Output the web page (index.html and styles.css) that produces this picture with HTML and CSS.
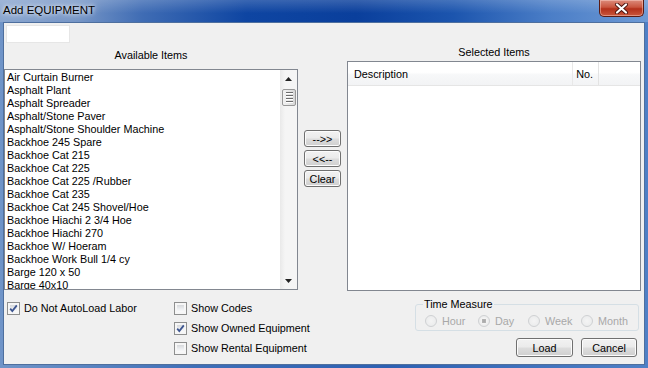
FILE: index.html
```html
<!DOCTYPE html>
<html lang="en">
<head>
  <meta charset="UTF-8">
  <title>Add EQUIPMENT</title>
  <link rel="stylesheet" href="styles.css">
</head>
<body>

<div class="window">
  <div class="titlebar">
    <span class="title">Add EQUIPMENT</span>
    <span class="close">
      <svg width="15" height="11" viewBox="0 0 15 11">
        <path d="M3 1.5 L12 9.5 M12 1.5 L3 9.5" stroke="#4a1410" stroke-width="4" stroke-linecap="round"/>
        <path d="M3 1.5 L12 9.5 M12 1.5 L3 9.5" stroke="#fff" stroke-width="2.2" stroke-linecap="round"/>
      </svg>
    </span>
  </div>

  <div class="client">
    <div class="topbox"></div>

    <div class="main">
      <div class="col col-left">
        <div class="caption cap-left">Available Items</div>
        <div class="listbox">
          <ul class="items">
            <li>Air Curtain Burner</li>
            <li>Asphalt Plant</li>
            <li>Asphalt Spreader</li>
            <li>Asphalt/Stone Paver</li>
            <li>Asphalt/Stone Shoulder Machine</li>
            <li>Backhoe 245 Spare</li>
            <li>Backhoe Cat 215</li>
            <li>Backhoe Cat 225</li>
            <li>Backhoe Cat 225 /Rubber</li>
            <li>Backhoe Cat 235</li>
            <li>Backhoe Cat 245 Shovel/Hoe</li>
            <li>Backhoe Hiachi 2 3/4 Hoe</li>
            <li>Backhoe Hiachi 270</li>
            <li>Backhoe W/ Hoeram</li>
            <li>Backhoe Work Bull 1/4 cy</li>
            <li>Barge 120 x 50</li>
            <li>Barge 40x10</li>
          </ul>
          <div class="vscroll">
            <div class="sb-btn">
              <svg width="7" height="4" viewBox="0 0 7 4"><path d="M0 4 L3.5 0 L7 4 Z" fill="#222"/></svg>
            </div>
            <div class="sb-thumb"><span></span><span></span><span></span><span></span></div>
            <div class="sb-track"></div>
            <div class="sb-btn">
              <svg width="7" height="4" viewBox="0 0 7 4"><path d="M0 0 L7 0 L3.5 4 Z" fill="#222"/></svg>
            </div>
          </div>
        </div>
      </div>

      <div class="movers">
        <button class="btn btn-move">--&gt;&gt;</button>
        <button class="btn btn-move">&lt;&lt;--</button>
        <button class="btn btn-move">Clear</button>
      </div>

      <div class="col col-right">
        <div class="caption cap-right">Selected Items</div>
        <div class="listview">
          <div class="lv-head">
            <span class="lv-col lv-desc">Description</span>
            <span class="lv-col lv-no">No.</span>
            <span class="lv-col lv-rest"></span>
          </div>
        </div>
      </div>
    </div>

    <div class="bottom">
      <div class="opts opts-a">
        <label class="check">
          <span class="box checked"><svg width="13" height="13" viewBox="0 0 13 13"><path d="M3.2 6.6 L5.3 9 L9.8 3.4" fill="none" stroke="#3d5590" stroke-width="1.8"/></svg></span>
          Do Not AutoLoad Labor
        </label>
      </div>
      <div class="opts opts-b">
        <label class="check"><span class="box"></span>Show Codes</label>
        <label class="check">
          <span class="box checked"><svg width="13" height="13" viewBox="0 0 13 13"><path d="M3.2 6.6 L5.3 9 L9.8 3.4" fill="none" stroke="#3d5590" stroke-width="1.8"/></svg></span>
          Show Owned Equipment
        </label>
        <label class="check"><span class="box"></span>Show Rental Equipment</label>
      </div>
      <div class="opts opts-c">
        <fieldset class="group">
          <legend>Time Measure</legend>
          <div class="radios">
            <span class="radio r-hour"><span class="dot"></span>Hour</span>
            <span class="radio r-day"><span class="dot on"></span>Day</span>
            <span class="radio r-week"><span class="dot"></span>Week</span>
            <span class="radio r-month"><span class="dot"></span>Month</span>
          </div>
        </fieldset>
        <div class="actions">
          <button class="btn btn-load">Load</button>
          <button class="btn btn-cancel">Cancel</button>
        </div>
      </div>
    </div>
  </div>
</div>

</body>
</html>
```

FILE: styles.css
```css
html, body {
  margin: 0;
  padding: 0;
}

body {
  width: 648px;
  height: 368px;
  overflow: hidden;
  font-family: "Liberation Sans", Arial, sans-serif;
  font-size: 10.8px;
  color: #000;
}

/* window frame */
.window {
  height: 368px;
  display: flex;
  flex-direction: column;
  background: linear-gradient(90deg, #6f94c8 0%, #3f6fb8 30%, #2d60b2 60%, #4f80c6 100%);
}

.titlebar {
  height: 22px;
  display: flex;
  justify-content: space-between;
  align-items: flex-start;
  background:
    linear-gradient(180deg, rgba(255,255,255,0.18) 0%, rgba(255,255,255,0) 60%),
    linear-gradient(90deg, #8aa6cf 0%, #7595c6 12%, #3f6cb4 22%, #0e45a2 38%, #0a3f9c 55%, #1c55ae 70%, #4b7ec7 85%, #6e9ad5 100%);
}

.title {
  padding: 3px 0 0 3px;
  font-size: 11.5px;
  line-height: 14px;
  color: #000;
  text-shadow: 0 0 4px #fff, 0 0 8px rgba(255,255,255,0.8);
}

.close {
  width: 45px;
  height: 17px;
  margin-right: 4px;
  box-sizing: border-box;
  border: 1px solid #5a1b14;
  border-top: none;
  border-radius: 0 0 5px 5px;
  background: linear-gradient(180deg, #dc8b7c 0%, #c9553f 45%, #b3301b 55%, #c9563c 100%);
  box-shadow: inset 0 0 0 1px rgba(255,220,210,0.45);
  display: flex;
  align-items: center;
  justify-content: center;
}

.client {
  flex: 1;
  margin: 0 3px 3px;
  border: 1px solid #4e6f9e;
  background: #f0f0f0;
  display: flex;
  flex-direction: column;
}

.topbox {
  width: 64px;
  height: 18px;
  margin: 2px 0 0 2px;
  box-sizing: border-box;
  background: #fff;
  border: 1px solid #e6e6e6;
}

/* list area */
.main {
  height: 248px;
  display: flex;
}

.col {
  width: 294px;
  display: flex;
  flex-direction: column;
}

.caption {
  text-align: center;
}

.cap-left {
  height: 26px;
  line-height: 24px;
}

.cap-right {
  height: 18px;
  line-height: 18px;
}

.col-right {
  margin-left: 6px;
}

.listbox {
  height: 221px;
  box-sizing: border-box;
  border: 1px solid #828790;
  background: #fff;
  display: flex;
  overflow: hidden;
}

.items {
  flex: 1;
  margin: 0;
  padding: 1px 0 0 2px;
  list-style: none;
  line-height: 13px;
  overflow: hidden;
  white-space: nowrap;
}

.vscroll {
  width: 17px;
  display: flex;
  flex-direction: column;
  background: linear-gradient(90deg, #e9e9e9 0%, #f5f5f5 30%, #f5f5f5 100%);
}

.sb-btn {
  height: 17px;
  display: flex;
  align-items: center;
  justify-content: center;
}

.sb-thumb {
  height: 17px;
  margin: 2px 1px 0 2px;
  box-sizing: border-box;
  border: 1px solid #979797;
  border-radius: 2px;
  background: linear-gradient(90deg, #f2f2f2 0%, #e4e4e4 60%, #d6d6d6 100%);
  display: flex;
  flex-direction: column;
  align-items: center;
  justify-content: center;
  gap: 1px;
}

.sb-thumb span {
  width: 7px;
  height: 1px;
  background: #6c6c6c;
  border-bottom: 1px solid #fff;
}

.sb-track {
  flex: 1;
}

.movers {
  width: 37px;
  margin-left: 6px;
  padding-top: 87px;
  display: flex;
  flex-direction: column;
  gap: 3px;
}

.btn {
  font-family: "Liberation Sans", Arial, sans-serif;
  font-size: 10.8px;
  color: #000;
  padding: 0;
  box-sizing: border-box;
  border: 1px solid #707070;
  border-radius: 3px;
  background: linear-gradient(180deg, #f2f2f2 0%, #ebebeb 48%, #dddddd 52%, #cfcfcf 100%);
  box-shadow: inset 0 0 0 1px #fcfcfc;
}

.btn-move {
  height: 17px;
  line-height: 14px;
}

.listview {
  height: 230px;
  box-sizing: border-box;
  border: 1px solid #828790;
  background: #fff;
}

.lv-head {
  height: 24px;
  box-sizing: border-box;
  display: flex;
  border-bottom: 1px solid #e5e5e5;
  background: linear-gradient(180deg, #ffffff 0%, #ffffff 45%, #f7f8f9 55%, #f2f3f5 100%);
}

.lv-col {
  box-sizing: border-box;
  padding-top: 6px;
  line-height: 13px;
}

.lv-desc {
  width: 225px;
  padding-left: 6px;
  border-right: 1px solid #e8e8e8;
}

.lv-no {
  width: 26px;
  padding-right: 5px;
  text-align: right;
  border-right: 1px solid #e3e3e3;
}

.lv-rest {
  flex: 1;
}

/* bottom options */
.bottom {
  flex: 1;
  display: flex;
}

.opts {
  padding-top: 7px;
  box-sizing: border-box;
}

.opts-a {
  width: 170px;
  padding-left: 3px;
}

.opts-b {
  width: 241px;
}

.opts-c {
  width: 224px;
}

.check {
  height: 20px;
  display: flex;
  align-items: center;
  gap: 4px;
}

.box {
  width: 13px;
  height: 13px;
  box-sizing: border-box;
  border: 1px solid #8e8f8f;
  background:
    linear-gradient(180deg, #d6d8db 0%, #eef0f2 60%, #fafafa 100%) 2px 2px / 7px 7px no-repeat,
    #fdfdfd;
  box-shadow: inset 0 0 0 2px #f6f6f6;
  position: relative;
}

.box svg {
  position: absolute;
  left: -1px;
  top: -1px;
}

.group {
  margin: 0;
  padding: 0 0 0 9px;
  border: 1px solid #d5dfe5;
  border-radius: 3px;
  height: 33px;
  box-sizing: border-box;
}

.group legend {
  padding: 0 1px;
  margin-left: -2px;
  line-height: 12px;
}

.radios {
  height: 16px;
  margin-top: 3px;
  display: flex;
  align-items: center;
  color: #a8a8a8;
}

.radio {
  display: flex;
  align-items: center;
  gap: 5px;
}

.r-hour { width: 53px; }
.r-day { width: 50px; }
.r-week { width: 53px; }

.dot {
  width: 12px;
  height: 12px;
  box-sizing: border-box;
  border: 1px solid #cfd1d3;
  border-radius: 50%;
  background: radial-gradient(circle, #f4f4f4 0%, #e8e9ea 100%);
}

.dot.on {
  background: radial-gradient(circle, #a8a8a8 0%, #b5b5b5 30%, #f4f4f4 36%, #e3e4e5 100%);
}

.actions {
  margin-top: 7px;
  padding-right: 2px;
  display: flex;
  justify-content: flex-end;
  gap: 8px;
}

.btn-load {
  width: 57px;
  height: 19px;
}

.btn-cancel {
  width: 56px;
  height: 19px;
}
```
